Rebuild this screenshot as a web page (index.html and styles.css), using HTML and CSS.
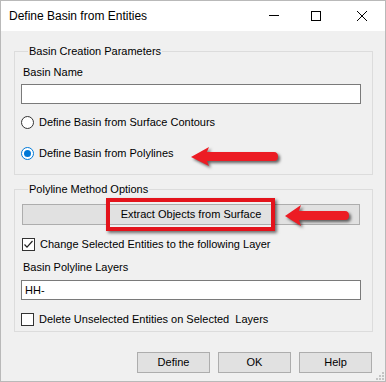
FILE: index.html
```html
<!DOCTYPE html>
<html lang="en">
<head>
  <meta charset="UTF-8">
  <title>Define Basin from Entities</title>
  <link rel="stylesheet" href="styles.css">
</head>
<body>
  <div class="window">
    <div class="titlebar">
      <span class="title">Define Basin from Entities</span>
      <div class="caption-buttons">
        <span class="cap cap-min">
          <svg width="10" height="10" viewBox="0 0 10 10"><path d="M0 4.5H10" stroke="#000" stroke-width="1"/></svg>
        </span>
        <span class="cap">
          <svg width="10" height="10" viewBox="0 0 10 10"><rect x="0.5" y="0.5" width="9" height="9" fill="none" stroke="#000" stroke-width="1"/></svg>
        </span>
        <span class="cap">
          <svg width="10" height="10" viewBox="0 0 10 10"><path d="M0 0L10 10M10 0L0 10" stroke="#000" stroke-width="1"/></svg>
        </span>
      </div>
    </div>

    <div class="content">
      <fieldset class="group group-basin">
        <legend>Basin Creation Parameters</legend>
        <div class="label">Basin Name</div>
        <div class="textbox"></div>
        <div class="option-row first">
          <span class="radio"></span>
          <span>Define Basin from Surface Contours</span>
        </div>
        <div class="option-row second">
          <span class="radio checked"></span>
          <span>Define Basin from Polylines</span>
        </div>
      </fieldset>

      <fieldset class="group group-polyline">
        <legend>Polyline Method Options</legend>
        <div class="wide-button">Extract Objects from Surface</div>
        <div class="option-row check-first">
          <span class="checkbox">
            <svg width="11" height="11" viewBox="0 0 11 11"><path d="M1.5 5.5L4 8.2L9.5 2" fill="none" stroke="#222" stroke-width="1.2"/></svg>
          </span>
          <span>Change Selected Entities to the following Layer</span>
        </div>
        <div class="label layers-label">Basin Polyline Layers</div>
        <div class="textbox layers-box">HH-</div>
        <div class="option-row check-second">
          <span class="checkbox"></span>
          <span>Delete Unselected Entities on Selected&nbsp; Layers</span>
        </div>
      </fieldset>

      <div class="button-row">
        <div class="button">Define</div>
        <div class="button">OK</div>
        <div class="button">Help</div>
      </div>
    </div>

    <!-- annotations drawn over the dialog -->
    <div class="highlight-box"></div>
    <svg class="arrow arrow-one" width="96" height="28" viewBox="0 0 96 28">
      <path d="M3 14L21 4L19 9L86 9Q90 9 90 13.5Q90 18 86 18L19 18L21 23Z" fill="#ec1c24"/>
    </svg>
    <svg class="arrow arrow-two" width="74" height="30" viewBox="0 0 74 30">
      <path d="M3 15L19 4L17 10L63 10Q67 10 67 14.5Q67 19 63 19L17 19L19 25Z" fill="#ec1c24"/>
    </svg>

    <svg class="grip" width="8" height="8" viewBox="0 0 8 8">
      <rect x="6" y="0" width="2" height="2" fill="#c4c4c4"/>
      <rect x="3" y="3" width="2" height="2" fill="#c4c4c4"/>
      <rect x="6" y="3" width="2" height="2" fill="#c4c4c4"/>
      <rect x="0" y="6" width="2" height="2" fill="#c4c4c4"/>
      <rect x="3" y="6" width="2" height="2" fill="#c4c4c4"/>
      <rect x="6" y="6" width="2" height="2" fill="#c4c4c4"/>
    </svg>
  </div>
</body>
</html>
```

FILE: styles.css
```css
body {
  margin: 0;
  font-family: 'Liberation Sans', Arial, sans-serif;
  font-size: 11px;
  color: #000;
  background: #f0f0f0;
}

.window {
  position: relative;
  width: 386px;
  height: 382px;
  box-sizing: border-box;
  border: 1px solid #b9b9b9;
  background: #f0f0f0;
  display: flex;
  flex-direction: column;
}

.titlebar {
  height: 30px;
  background: #ffffff;
  display: flex;
  align-items: center;
  justify-content: space-between;
}

.title {
  padding-left: 8px;
  font-size: 12px;
}

.caption-buttons {
  display: flex;
  height: 100%;
}

.cap {
  width: 46px;
  display: flex;
  align-items: center;
  justify-content: center;
}

.cap-min {
  width: 38px;
}

.content {
  padding: 14px 12px 0 13px;
  display: flex;
  flex-direction: column;
}

.group {
  margin: 0;
  border: 1px solid #dcdcdc;
  min-width: 0;
}

.group legend {
  margin-left: 7px;
  padding: 0 1px;
  line-height: 13px;
}

.group-basin {
  padding: 7px 11px 11px 6px;
}

.group-polyline {
  margin-top: 8px;
  padding: 8px 11px 2px 6px;
}

.label {
  line-height: 14px;
  padding-left: 2px;
}

.textbox {
  height: 20px;
  box-sizing: border-box;
  margin-top: 5px;
  border: 1px solid #7a7a7a;
  background: #ffffff;
  padding-left: 3px;
  line-height: 18px;
}

.option-row {
  height: 20px;
  display: flex;
  align-items: center;
  gap: 5px;
}

.option-row.first {
  margin-top: 8px;
}

.option-row.second {
  margin-top: 11px;
}

.radio {
  width: 13px;
  height: 13px;
  box-sizing: border-box;
  border: 1px solid #333333;
  border-radius: 50%;
  background: #ffffff;
  display: flex;
  align-items: center;
  justify-content: center;
}

.radio.checked {
  border-color: #0078d7;
}

.radio.checked::after {
  content: "";
  width: 7px;
  height: 7px;
  border-radius: 50%;
  background: #0078d7;
}

.checkbox {
  width: 13px;
  height: 13px;
  box-sizing: border-box;
  border: 1px solid #333333;
  background: #ffffff;
  display: flex;
  align-items: center;
  justify-content: center;
}

.wide-button {
  height: 21px;
  box-sizing: border-box;
  margin: 0 1px;
  border: 1px solid #adadad;
  background: #e1e1e1;
  text-align: center;
  line-height: 19px;
}

.option-row.check-first {
  margin-top: 9px;
  padding-left: 1px;
}

.layers-label {
  margin-top: 6px;
}

.layers-box {
  margin-top: 6px;
}

.option-row.check-second {
  margin-top: 9px;
}

.button-row {
  margin-top: 20px;
  margin-right: 1px;
  display: flex;
  justify-content: flex-end;
  gap: 8px;
}

.button {
  width: 73px;
  height: 21px;
  box-sizing: border-box;
  border: 1px solid #adadad;
  background: #e1e1e1;
  text-align: center;
  line-height: 19px;
}

.highlight-box {
  position: absolute;
  left: 105px;
  top: 197px;
  width: 169px;
  height: 33px;
  box-sizing: border-box;
  border: 4px solid #e3131b;
  box-shadow: 2px 2px 3px rgba(0, 0, 0, 0.55);
}

.arrow {
  position: absolute;
  filter: drop-shadow(2px 2px 1.5px rgba(0, 0, 0, 0.6));
}

.arrow-one {
  left: 187px;
  top: 142px;
}

.arrow-two {
  left: 281px;
  top: 200px;
}

.grip {
  position: absolute;
  right: 1px;
  bottom: 1px;
}
```
